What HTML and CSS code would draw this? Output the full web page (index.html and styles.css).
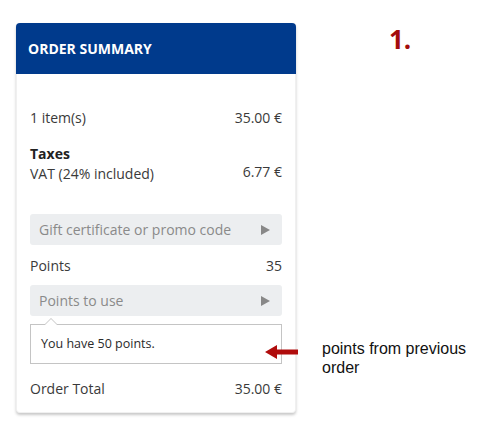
FILE: index.html
```html
<!DOCTYPE html>
<html lang="en">
<head>
    <meta charset="UTF-8">
    <meta name="viewport" content="width=device-width, initial-scale=1.0">
    <title>Order Summary</title>
    <link rel="stylesheet" href="styles.css">
</head>
<body>
    <div class="page">
        <div class="card">
            <div class="card-header">ORDER SUMMARY</div>
            <div class="card-body">
                <div class="row">
                    <span>1 item(s)</span>
                    <span>35.00 &euro;</span>
                </div>

                <div class="taxes">
                    <div class="taxes-title">Taxes</div>
                    <div class="row row-vat">
                        <span>VAT (24% included)</span>
                        <span class="vat-value">6.77 &euro;</span>
                    </div>
                </div>

                <div class="field field-promo">
                    <span>Gift certificate or promo code</span>
                    <span class="field-arrow"></span>
                </div>

                <div class="row row-points">
                    <span>Points</span>
                    <span>35</span>
                </div>

                <div class="field">
                    <span>Points to use</span>
                    <span class="field-arrow"></span>
                </div>

                <div class="popup">You have 50 points.</div>

                <div class="row row-total">
                    <span>Order Total</span>
                    <span>35.00 &euro;</span>
                </div>
            </div>
        </div>

        <div class="step-number">1.</div>

        <div class="note">
            <svg class="note-arrow" width="33" height="14" viewBox="0 0 33 14">
                <polygon points="0,7 12,0 12,4.5 33,4.5 33,9.5 12,9.5 12,14" fill="#b00c0c"/>
            </svg>
            <div class="note-text">points from previous<br>order</div>
        </div>
    </div>
</body>
</html>
```

FILE: styles.css
```css
body {
    margin: 0;
    font-family: "Open Sans", Arial, sans-serif;
    color: #3a3a3a;
    background: #fff;
}
.page {
    position: relative;
    width: 500px;
    height: 441px;
    padding: 23px 16px 0;
    box-sizing: border-box;
}
.card {
    width: 280px;
    background: #fff;
    border-radius: 4px;
    border: 1px solid #f0f0f0;
    border-top: none;
    box-sizing: border-box;
    box-shadow: 0 2px 3px rgba(0, 0, 0, 0.22);
}
.card-header {
    background-color: #003a8c;
    color: #fff;
    font-weight: bold;
    font-size: 14px;
    height: 51px;
    line-height: 51px;
    padding-left: 12px;
    border-radius: 4px 4px 0 0;
    margin: 0 -1px;
}
.card-body {
    padding: 34px 13px 13px;
    font-size: 14px;
    line-height: 20px;
}
.row {
    display: flex;
    justify-content: space-between;
}
.taxes {
    margin-top: 16px;
}
.taxes-title {
    font-weight: bold;
    color: #222;
}
.vat-value {
    position: relative;
    top: -2px;
}
.field {
    display: flex;
    justify-content: space-between;
    align-items: center;
    height: 31px;
    background-color: #eceef0;
    border-radius: 3px;
    padding: 0 12px 0 9px;
    color: #8a8a8a;
    margin-top: 9px;
}
.field-promo {
    margin-top: 30px;
}
.field-arrow {
    width: 0;
    height: 0;
    border-top: 5px solid transparent;
    border-bottom: 5px solid transparent;
    border-left: 9px solid #888;
}
.row-points {
    margin-top: 11px;
}
.popup {
    position: relative;
    margin-top: 8px;
    height: 38px;
    line-height: 38px;
    border: 1px solid #c4c4c4;
    padding-left: 10px;
    font-size: 12.5px;
    color: #2a2a2a;
}
.popup::before,
.popup::after {
    content: "";
    position: absolute;
    left: 13px;
    width: 0;
    height: 0;
    border-left: 7px solid transparent;
    border-right: 7px solid transparent;
}
.popup::before {
    top: -7px;
    border-bottom: 7px solid #c4c4c4;
}
.popup::after {
    top: -6px;
    border-bottom: 7px solid #fff;
}
.row-total {
    margin-top: 15px;
}
.step-number {
    position: absolute;
    left: 389px;
    top: 21px;
    font-family: "Open Sans", Arial, sans-serif;
    font-weight: bold;
    font-size: 26px;
    color: #a30c0c;
}
.note {
    position: absolute;
    left: 265px;
    top: 339px;
    display: flex;
    align-items: flex-start;
    gap: 24px;
}
.note-arrow {
    margin-top: 6px;
}
.note-text {
    font-family: "Liberation Sans", Arial, sans-serif;
    font-size: 16px;
    line-height: 19px;
    color: #111;
}
```
